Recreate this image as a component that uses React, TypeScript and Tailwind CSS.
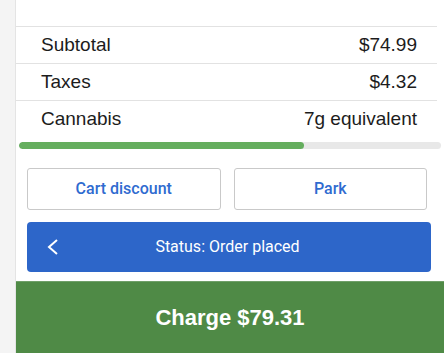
const rows = [
  { label: "Subtotal", value: "$74.99" },
  { label: "Taxes", value: "$4.32" },
  { label: "Cannabis", value: "7g equivalent" },
];

export default function App() {
  const cannabisPercentage = 67.5;

  return (
    <div className="flex w-[444px] h-[360px] bg-white items-start">
      <div className="w-[16px] h-[353px] bg-[#f4f4f4] border-r border-[#e4e4e4]" />
      <div className="flex flex-col flex-1 h-[353px]">
        <div className="h-[27px] mr-[7px] border-b border-[#e2e2e2]" />
        {rows.map((row, i) => (
          <div
            key={row.label}
            className={`flex items-center justify-between h-[37px] mr-[7px] pl-[25px] pr-[20px] font-['Liberation_Sans',sans-serif] text-[19px] text-[#1c1c1c] ${
              i < rows.length - 1 ? "border-b border-[#e2e2e2]" : ""
            }`}
          >
            <span>{row.label}</span>
            <span>{row.value}</span>
          </div>
        ))}
        <div className="mt-[4px] mx-[3px] h-[7px] rounded-full bg-[#e8e8e8] overflow-hidden">
          <div
            className="h-full rounded-full bg-[#65ae5e]"
            style={{ width: `${cannabisPercentage}%` }}
          />
        </div>

        <div className="flex gap-[13px] mt-[19px] pl-[11px] pr-[17px] font-['Roboto',sans-serif]">
          <button className="flex-1 h-[42px] rounded-[3px] border border-[#c9c9c9] bg-white text-[16px] font-medium text-[#2f6bd0]">
            Cart discount
          </button>
          <button className="flex-1 h-[42px] rounded-[3px] border border-[#c9c9c9] bg-white text-[16px] font-medium text-[#2f6bd0]">
            Park
          </button>
        </div>

        <div className="relative flex items-center justify-center mt-[12px] ml-[11px] mr-[13px] h-[50px] rounded-[4px] bg-[#2d66c9] font-['Roboto',sans-serif] text-[16px] text-white">
          <svg
            className="absolute left-[20px] top-[17px]"
            width="12"
            height="16"
            viewBox="0 0 12 16"
            fill="none"
            stroke="white"
            strokeWidth="2"
          >
            <polyline points="10,1 2,8 10,15" />
          </svg>
          <span className="pr-[3px]">Status: Order placed</span>
        </div>

        <div className="flex items-center justify-center mt-[9px] flex-1 bg-[#4f8a46] border-t border-[#6f9f68] font-['Liberation_Sans',sans-serif] font-bold text-[22px] text-white">
          Charge $79.31
        </div>
      </div>
    </div>
  );
}
